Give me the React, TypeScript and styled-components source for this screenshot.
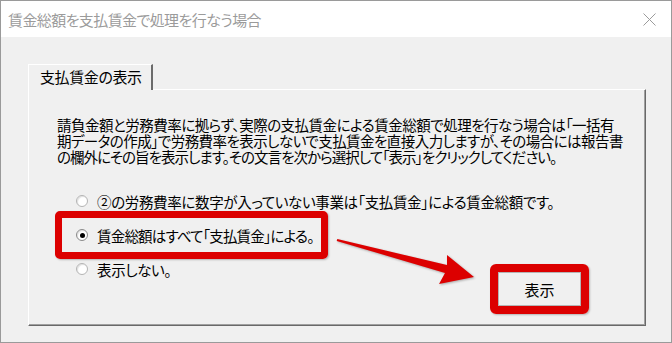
import styled, { createGlobalStyle } from "styled-components";

const GlobalStyle = createGlobalStyle`
  html, body {
    margin: 0;
    padding: 0;
    background: #f0f0f0;
  }

  body {
    font-family: "Noto Sans CJK JP", "Noto Sans", sans-serif;
    color: #000;
  }

  * {
    box-sizing: border-box;
  }
`;

// each line is tracked a little so it spans the same width as the original UI font
const descriptionLines = [
  { text: "請負金額と労務費率に拠らず、実際の支払賃金による賃金総額で処理を行なう場合は「一括有", tracking: -0.5 },
  { text: "期データの作成」で労務費率を表示しないで支払賃金を直接入力しますが、その場合には報告書", tracking: -0.55 },
  { text: "の欄外にその旨を表示します。その文言を次から選択して「表示」をクリックしてください。", tracking: -0.95 },
];

const RadioOption = ({ label, checked }: { label: string; checked?: boolean }) => {
  return (
    <OptionRow>
      <RadioMark $checked={!!checked} />
      <span>{label}</span>
    </OptionRow>
  );
};

const App = () => {
  return (
    <>
      <GlobalStyle />
      <Window>
        <TitleBar>
          <TitleText>賃金総額を支払賃金で処理を行なう場合</TitleText>
          <CloseIcon width="13" height="13" viewBox="0 0 13 13">
            <path d="M0.5 0.5 L12.5 12.5 M12.5 0.5 L0.5 12.5" />
          </CloseIcon>
        </TitleBar>

        <Body>
          <Tab>支払賃金の表示</Tab>
          <Panel>
            <Description>
              {descriptionLines.map((line, i) => (
                <DescLine key={i} $tracking={line.tracking}>
                  {line.text}
                </DescLine>
              ))}
            </Description>

            <LowerRow>
              <OptionList>
                <RadioOption label="②の労務費率に数字が入っていない事業は「支払賃金」による賃金総額です。" />
                <Highlight>
                  <RadioOption label="賃金総額はすべて「支払賃金」による。" checked />
                </Highlight>
                <RadioOption label="表示しない。" />
              </OptionList>

              <ButtonFrame>
                <PushButton>表示</PushButton>
              </ButtonFrame>
            </LowerRow>
          </Panel>
        </Body>

        <ArrowLayer viewBox="0 0 672 343" width="672" height="343">
          <polygon points="337.3,239 447,265.1 447,255 474,277 439,284 445,272.9 336.7,241" />
        </ArrowLayer>
      </Window>
    </>
  );
};

export default App;

const Window = styled.div`
  position: relative;
  width: 672px;
  height: 343px;
  border: 1px solid #9a9a9a;
  background: #f0f0f0;
  display: flex;
  flex-direction: column;
  overflow: hidden;
`;

const TitleBar = styled.div`
  height: 36px;
  flex-shrink: 0;
  padding: 0 15px 0 7px;
  background: #fff;

  display: flex;
  align-items: center;
  justify-content: space-between;
`;

const TitleText = styled.span`
  font-size: 15px;
  letter-spacing: -0.6px;
  color: #9b9b9b;
  font-feature-settings: "palt";
`;

const CloseIcon = styled.svg`
  stroke: #9b9b9b;
  stroke-width: 1;
  fill: none;
`;

const Body = styled.div`
  flex: 1;
  min-width: 0;
  padding: 27px 25px 16px 27px;

  display: flex;
  flex-direction: column;
`;

const Tab = styled.div`
  position: relative;
  z-index: 1;
  align-self: flex-start;
  width: 125px;
  height: 26px;
  margin-bottom: -1px;
  padding: 0 0 3px 11px;

  display: flex;
  align-items: center;

  background: #f0f0f0;
  border-top: 1px solid #fff;
  border-left: 1px solid #fff;
  border-right: 2px solid #6b6b6b;
  font-size: 15px;
  letter-spacing: -0.4px;
  font-feature-settings: "palt";
`;

const Panel = styled.div`
  flex: 1;
  min-width: 0;
  padding: 27px 56px 11px 28px;

  display: flex;
  flex-direction: column;

  border-top: 1px solid #fff;
  border-left: 1px solid #fff;
  border-right: 1px solid #696969;
  border-bottom: 1px solid #696969;
  box-shadow: inset -1px -1px 0 #a0a0a0;
`;

const Description = styled.div`
  display: flex;
  flex-direction: column;
  align-items: flex-start;
  font-size: 14.5px;
  line-height: 16px;
  white-space: nowrap;
  font-feature-settings: "palt";
`;

const DescLine = styled.span<{ $tracking: number }>`
  letter-spacing: ${({ $tracking }) => $tracking}px;
`;

const LowerRow = styled.div`
  flex: 1;
  min-width: 0;
  display: flex;
  align-items: flex-end;
`;

const OptionList = styled.div`
  flex: 1;
  min-width: 0;
  align-self: flex-start;
  margin-top: 26px;

  display: flex;
  flex-direction: column;
  align-items: flex-start;
`;

const OptionRow = styled.div`
  height: 20px;
  padding-left: 19px;

  display: flex;
  align-items: center;
  gap: 9px;

  font-size: 14.5px;
  letter-spacing: -0.35px;
  white-space: nowrap;
  font-feature-settings: "palt";
`;

const Highlight = styled.div`
  width: 273px;
  margin-left: -2px;
  padding: 7px 0;

  border: 7px solid #dc0000;
  border-radius: 5px;
  box-shadow: 1px 1px 2px rgba(0, 0, 0, 0.25);

  ${OptionRow} {
    padding-left: 14px;
    letter-spacing: -0.8px;
  }
`;

const RadioMark = styled.span<{ $checked: boolean }>`
  position: relative;
  width: 12px;
  height: 12px;
  flex-shrink: 0;

  border-radius: 50%;
  background: #fff;
  border: 1px solid ${({ $checked }) => ($checked ? "#8a8a8a" : "#b4b4b4")};
  box-shadow: inset 1px 1px 1px rgba(0, 0, 0, 0.12);

  &::after {
    content: "";
    display: ${({ $checked }) => ($checked ? "block" : "none")};
    position: absolute;
    left: 2.5px;
    top: 2.5px;
    width: 5px;
    height: 5px;
    border-radius: 50%;
    background: #000;
  }
`;

const ButtonFrame = styled.div`
  flex-shrink: 0;
  border: 8px solid #dc0000;
  border-radius: 6px;
  box-shadow: 1px 1px 2px rgba(0, 0, 0, 0.25);
`;

const PushButton = styled.button`
  display: block;
  width: 83px;
  height: 34px;
  padding: 0;

  background: #f0f0f0;
  border: 1px solid #b4b4b4;
  font-family: "Noto Sans CJK JP", sans-serif;
  font-size: 15px;
  color: #000;
`;

const ArrowLayer = styled.svg`
  position: absolute;
  left: -1px;
  top: -1px;
  pointer-events: none;

  polygon {
    fill: #dc0000;
    filter: drop-shadow(1px 1px 1px rgba(0, 0, 0, 0.3));
  }
`;
